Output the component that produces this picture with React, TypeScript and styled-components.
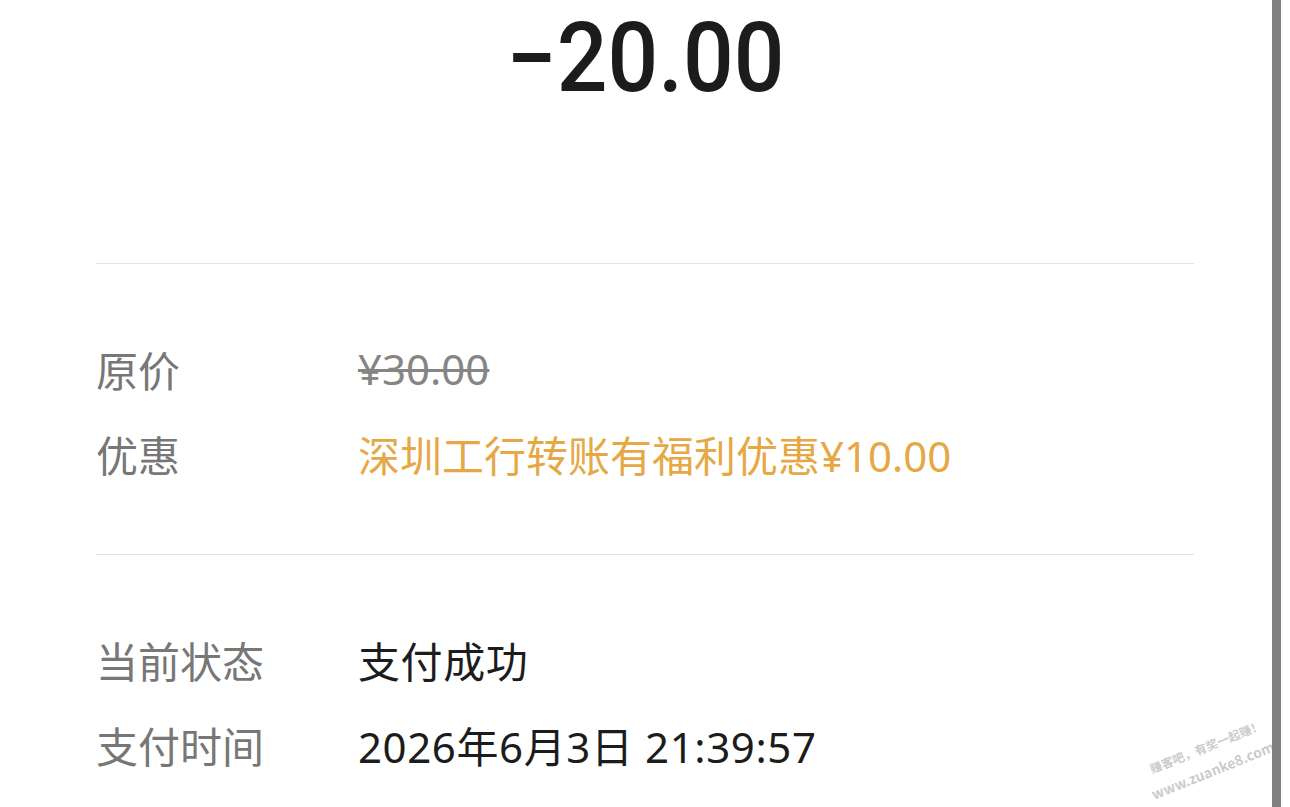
import React from "react";
import styled, { createGlobalStyle } from "styled-components";

const GlobalStyle = createGlobalStyle`
  html, body {
    margin: 0;
    padding: 0;
    background: #ffffff;
    overflow: hidden;
  }
  body {
    font-family: "Noto Sans", "Noto Sans CJK SC", sans-serif;
  }
`;

const Page = styled.div`
  position: relative;
  width: 1290px;
  height: 807px;
  background: #ffffff;
  overflow: hidden;
`;

const Content = styled.div`
  display: flex;
  flex-direction: column;
  padding: 0 96px;
`;

const AmountBox = styled.div`
  display: flex;
  justify-content: center;
  align-items: flex-start;
  height: 263px;
  padding-top: 10px;
  box-sizing: border-box;
`;

const Amount = styled.div`
  font-family: Roboto, "Noto Sans", sans-serif;
  font-weight: 500;
  font-size: 96px;
  line-height: 96px;
  color: #1c1c1c;
  transform: scaleX(0.93);
`;

const Divider = styled.div`
  height: 1px;
  background: #e3e3e3;
`;

const Section = styled.div<{ $top: number; $bottom: number }>`
  display: flex;
  flex-direction: column;
  padding-top: ${(p) => p.$top}px;
  padding-bottom: ${(p) => p.$bottom}px;
`;

const Row = styled.div`
  display: grid;
  grid-template-columns: 262px 1fr;
  height: 85px;
  align-items: center;
  font-size: 42px;
  font-family: "Noto Sans CJK SC", "Noto Sans", sans-serif;
`;

const Label = styled.span`
  color: #777777;
`;

const Value = styled.span<{ $tone?: "dark" | "muted" | "orange" }>`
  color: ${(p) =>
    p.$tone === "orange" ? "#e6a845" : p.$tone === "muted" ? "#858585" : "#1c1c1c"};
  text-decoration: ${(p) => (p.$tone === "muted" ? "line-through" : "none")};
  text-decoration-thickness: 3px;
  letter-spacing: ${(p) => (p.$tone ? "0" : "0.6px")};
  font-family: "Noto Sans", "Noto Sans CJK SC", sans-serif;
`;

const Scrollbar = styled.div`
  position: absolute;
  top: 0;
  right: 9px;
  width: 9px;
  height: 100%;
  background: #808080;
`;

const Watermark = styled.div`
  position: absolute;
  left: 1146px;
  top: 758px;
  transform: rotate(-22deg);
  transform-origin: left top;
  color: rgba(150, 150, 150, 0.5);
  font-family: "Noto Sans CJK SC", sans-serif;
  font-weight: 700;
  display: flex;
  flex-direction: column;
  align-items: flex-start;
  white-space: nowrap;
`;

const WatermarkLine = styled.span<{ $size: number; $shift?: number }>`
  font-size: ${(p) => p.$size}px;
  line-height: 24px;
  margin-left: ${(p) => p.$shift ?? 0}px;
`;

export default function App() {
  return (
    <Page>
      <GlobalStyle />
      <Content>
        <AmountBox>
          <Amount>−20.00</Amount>
        </AmountBox>
        <Divider />
        <Section $top={62} $bottom={58}>
          <Row>
            <Label>原价</Label>
            <Value $tone="muted">¥30.00</Value>
          </Row>
          <Row>
            <Label>优惠</Label>
            <Value $tone="orange">深圳工行转账有福利优惠¥10.00</Value>
          </Row>
        </Section>
        <Divider />
        <Section $top={62} $bottom={0}>
          <Row>
            <Label>当前状态</Label>
            <Value>支付成功</Value>
          </Row>
          <Row>
            <Label>支付时间</Label>
            <Value>2026年6月3日 21:39:57</Value>
          </Row>
        </Section>
      </Content>
      <Watermark>
        <WatermarkLine $size={12}>赚客吧，有奖一起赚！</WatermarkLine>
        <WatermarkLine $size={14} $shift={-8}>www.zuanke8.com</WatermarkLine>
      </Watermark>
      <Scrollbar />
    </Page>
  );
}
